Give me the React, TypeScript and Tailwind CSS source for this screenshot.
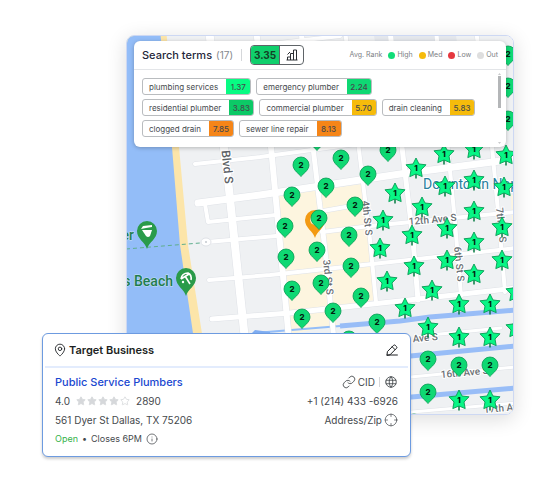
import { Crosshair, Info, Link as LinkIcon, MapPin, Star } from "lucide-react";
import { TbWorld } from "react-icons/tb";

const searchTerms = [
  { name: "plumbing services", rank: "1.37", color: "bg-[#08fb83]" },
  { name: "emergency plumber", rank: "2.24", color: "bg-[#0fd873]" },
  { name: "residential plumber", rank: "3.83", color: "bg-[#0cc966]" },
  { name: "commercial plumber", rank: "5.70", color: "bg-[#f6bb0b]" },
  { name: "drain cleaning", rank: "5.83", color: "bg-[#f6bb0b]" },
  { name: "clogged drain", rank: "7.85", color: "bg-[#f58518]" },
  { name: "sewer line repair", rank: "8.13", color: "bg-[#f58518]" },
];

const legend = [
  { label: "High", color: "bg-[#12dc78]" },
  { label: "Med", color: "bg-[#f6bb0b]" },
  { label: "Low", color: "bg-[#e5383f]" },
  { label: "Out", color: "bg-[#dedede]" },
];

const roads = [
  { d: "M209 30 L228 180 L245 340", w: 8 },
  { d: "M256 30 L271 147 L289 340", w: 6 },
  { d: "M301 30 L313 147 L325 250 L334 340", w: 5 },
  { d: "M345 30 L359 150 L370 240 L376 302", w: 4 },
  { d: "M390 30 L402 147 L413 240 L418 300", w: 5 },
  { d: "M436 30 L449 160 L455 222 L461 296", w: 4 },
  { d: "M476 30 L492 147 L499 222 L505 292", w: 4 },
  { d: "M198 203 L260 195 L400 174 L516 159", w: 7 },
  { d: "M195 164 L260 157 L400 138", w: 4 },
  { d: "M205 204 L208 222 L276 215", w: 4 },
  { d: "M317 212 L357 205", w: 4 },
  { d: "M207 242 L276 236", w: 4 },
  { d: "M322 232 L370 226 L516 212", w: 4 },
  { d: "M209 280 L270 275 L400 261 L516 248", w: 4 },
  { d: "M212 319 L290 313 L400 301 L516 288", w: 5 },
  { d: "M430 335 L501 328", w: 3 },
  { d: "M400 378 L516 367", w: 3 },
  { d: "M400 413 L516 403", w: 3 },
  { d: "M230 48 L270 44 L340 36", w: 4 },
];

const rankTwoPins = [
  [508, 54], [508, 86], [508, 119], [317, 139], [388, 150], [341, 158],
  [301, 165], [368, 174], [326, 186], [292, 195], [355, 205], [319, 218],
  [285, 226], [349, 235], [317, 250], [286, 257], [351, 266], [321, 283],
  [292, 289], [361, 296], [333, 311], [302, 317], [377, 322], [349, 339],
  [428, 359], [459, 365], [490, 365], [428, 392], [414, 422],
];

const rankOneStars = [
  [444, 154], [474, 149], [506, 155], [416, 168], [445, 186], [474, 180],
  [504, 187], [395, 193], [422, 207], [474, 211], [383, 220], [447, 228],
  [502, 227], [412, 235], [474, 242], [380, 248], [447, 260], [502, 260],
  [414, 266], [474, 274], [387, 281], [432, 290], [516, 292], [405, 308],
  [459, 304], [490, 304], [428, 327], [516, 328], [459, 337], [490, 337],
  [459, 400], [490, 400],
];

function RankPin({ x, y }: { x: number; y: number }) {
  return (
    <g transform={`translate(${x} ${y})`}>
      <path
        d="M0 11.5 C-1.5 9 -8 5.5 -8 0 A8 8 0 0 1 8 0 C8 5.5 1.5 9 0 11.5 Z"
        fill="#0fd873"
        stroke="#079a53"
        strokeWidth="0.8"
      />
      <text y="3" textAnchor="middle" fontSize="8" fontWeight="800" fill="#02200f">
        2
      </text>
    </g>
  );
}

function RankStar({ x, y }: { x: number; y: number }) {
  return (
    <g transform={`translate(${x} ${y})`}>
      <path d="M0 5 V10.5" stroke="#067a42" strokeWidth="1.5" />
      <path
        d="M0 -10 L3 -4 L10 -3.2 L5 2 L6.2 8.6 L0 6 L-6.2 8.6 L-5 2 L-10 -3.2 L-3 -4 Z"
        fill="#08f585"
        stroke="#079a53"
        strokeWidth="0.9"
        strokeLinejoin="round"
      />
      <text y="3" textAnchor="middle" fontSize="8" fontWeight="800" fill="#02200f">
        1
      </text>
    </g>
  );
}

function RankMap() {
  return (
    <svg
      className="absolute inset-0 h-full w-full"
      viewBox="127 36 386 378"
      preserveAspectRatio="xMinYMin slice"
      role="img"
      aria-label="Local ranking map"
    >
      <rect x="126" y="35" width="388" height="380" fill="#eff1f3" />
      <path d="M374 35 L456 35 L462 80 L380 80 Z" fill="#e4e7ec" />

      {/* coast */}
      <path d="M126 30 H166 L179 147 L188 245 L203 340 V420 H126 Z" fill="#fce5a9" />
      <path d="M126 30 H160 L172 147 L180 245 L194 340 V420 H126 Z" fill="#93bdf8" />

      {/* commercial blocks */}
      <path d="M277 196 L362 184 L374 300 L335 308 L337 326 L289 334 Z" fill="#fdf5df" />
      <path d="M511 195 L516 195 V225 L512 225 Z" fill="#fdf5df" />

      {/* canals */}
      <path d="M255 333 L340 326" stroke="#93bdf8" strokeWidth="2" />
      <path d="M252 333 L255 330 L270 332 V335 Z" fill="#7fadf2" />
      <path d="M340 326 L400 321 L430 317 L516 310" stroke="#98bdf7" strokeWidth="5" fill="none" />
      <path d="M400 357 L516 346" stroke="#98bdf7" strokeWidth="5" />
      <path d="M400 398 L516 388" stroke="#98bdf7" strokeWidth="5" />

      <g fill="none" strokeLinecap="round" strokeLinejoin="round">
        {roads.map((road) => (
          <path key={road.d} d={road.d} stroke="#dfe2e7" strokeWidth={road.w + 1} />
        ))}
        {roads.map((road) => (
          <path key={road.d} d={road.d} stroke="#ffffff" strokeWidth={road.w} />
        ))}
      </g>
      <ellipse cx="206" cy="242" rx="5" ry="4" fill="#fff" stroke="#dfe2e7" />
      <circle cx="206" cy="242" r="1" fill="#c3c8ce" />
      <path d="M126 249 L200 243" stroke="#5fae8d" strokeDasharray="4 3" />

      <g
        fontFamily="Roboto, sans-serif"
        fontSize="10"
        fontWeight="500"
        fill="#6b7075"
        stroke="#fff"
        strokeWidth="2"
        paintOrder="stroke"
      >
        <text transform="translate(225 184) rotate(84)" textAnchor="end" fontSize="12" fill="#5c6166">
          Gulf Shore Blvd S
        </text>
        <text transform="translate(362 201) rotate(84)">4th St S</text>
        <text transform="translate(323 260) rotate(84)">3rd St S</text>
        <text transform="translate(454 247) rotate(84)">6th St S</text>
        <text transform="translate(496 208) rotate(84)">7th St S</text>
        <text transform="translate(409 225) rotate(-5)">12th Ave S</text>
        <text transform="translate(438 340) rotate(-5)" textAnchor="end">
          14th Ave S
        </text>
        <text transform="translate(441 378) rotate(-5)">16th Ave S</text>
        <text transform="translate(484 413) rotate(-5)">17th Ave S</text>
        <text x="423" y="189" fontSize="14" fontWeight="400" fill="#287f9e">
          Downtown Naples
        </text>
      </g>

      <g
        fontFamily="Roboto, sans-serif"
        fontSize="14"
        fontWeight="500"
        fill="#1f7d4f"
        stroke="#c9e0f5"
        strokeWidth="1"
        paintOrder="stroke"
      >
        <text x="134" y="240" textAnchor="end">
          Pier
        </text>
        <text x="173" y="286" textAnchor="end">
          Naples Beach
        </text>
      </g>

      {/* landmarks */}
      <g transform="translate(147 231)">
        <path d="M0 18 C-2 11 -10 8 -10 0 A10 10 0 0 1 10 0 C10 8 2 11 0 18 Z" fill="#2a9b4a" />
        <path d="M-5 -1 H5 L3 5 Q1 7 -1 5 Z" fill="#fff" />
        <path d="M-6 -2 L-4 -5 L5 -6 V-4 L-1 -3 Z" fill="#fff" />
      </g>
      <g transform="translate(186 278)">
        <path d="M0 18 C-2 11 -10 8 -10 0 A10 10 0 0 1 10 0 C10 8 2 11 0 18 Z" fill="#2a9b4a" />
        <path d="M-5 1 Q-4 -5 2 -5 Q6 -3 5 2 M-5 1 L3 -4 M-1 -2 L4 6" fill="none" stroke="#fff" strokeWidth="1.6" />
        <circle cx="-3" cy="4" r="1.2" fill="#fff" />
      </g>

      {/* business location */}
      <g transform="translate(315 220)">
        <path d="M0 18 C-2 11 -10 8 -10 0 A10 10 0 0 1 10 0 C10 8 2 11 0 18 Z" fill="#f39a12" />
        <circle r="5" fill="#fbe6bd" />
      </g>

      <g fontFamily="Inter, sans-serif">
        {rankOneStars.map(([x, y]) => (
          <RankStar key={`${x}-${y}`} x={x} y={y} />
        ))}
        {rankTwoPins.map(([x, y]) => (
          <RankPin key={`${x}-${y}`} x={x} y={y} />
        ))}
      </g>
    </svg>
  );
}

function BarsIcon() {
  return (
    <svg className="h-3 w-3" viewBox="0 0 12 12" fill="none" stroke="#2b2f33" strokeLinejoin="round">
      <path d="M1.5 11 V8 H4.5 V11 M4.5 11 V4.5 H7.5 V11 M7.5 11 V1 H10.5 V11 M0.5 11 H11.5 M1.5 5.5 L4 3" />
    </svg>
  );
}

function EditIcon() {
  return (
    <svg
      className="h-3 w-3"
      viewBox="0 0 12 12"
      fill="none"
      stroke="#1c1f22"
      strokeLinecap="round"
      strokeLinejoin="round"
    >
      <path d="M1 11 L1.4 7.6 L7.6 1.3 Q8.4 0.6 9.2 1.3 L10.6 2.7 Q11.3 3.5 10.6 4.2 L4.2 10.6 Z M6.2 2.8 L9.1 5.7 M1 11 H11.4" />
    </svg>
  );
}

function SearchTerms() {
  return (
    <section className="relative rounded-md bg-white shadow-[0_1px_4px_rgba(0,0,0,0.25)]">
      <header className="flex h-[29px] items-center border-b border-[#e3e5e8] px-2">
        <h1 className="text-[11px] font-medium text-[#23263a]">Search terms</h1>
        <span className="ml-1 text-[10px] text-[#85888c]">(17)</span>
        <span className="mx-2 h-3 w-px bg-[#d5d7da]" />
        <button
          type="button"
          aria-label="Show rank chart"
          className="flex h-5 items-stretch overflow-hidden rounded-[4px] border border-[#5f6468]"
        >
          <span className="flex w-7 items-center justify-center bg-[#10cf6c] text-[10px] font-bold text-[#134127]">
            3.35
          </span>
          <span className="flex w-6 items-center justify-center border-l border-[#5f6468]">
            <BarsIcon />
          </span>
        </button>
        <div className="ml-auto flex items-center gap-1.5 text-[7px] text-[#7c8084]">
          <span>Avg. Rank</span>
          {legend.map((item) => (
            <span key={item.label} className="flex items-center gap-0.5">
              <span className={`h-[7px] w-[7px] rounded-full ${item.color}`} />
              {item.label}
            </span>
          ))}
        </div>
      </header>
      <div className="flex">
        <ul className="flex flex-1 flex-wrap gap-x-[5px] gap-y-1 pt-2 pr-3 pb-2.5 pl-2">
          {searchTerms.map((term) => (
            <li
              key={term.name}
              className="flex h-[17px] items-stretch overflow-hidden rounded-[3px] border border-[#b9bcbf] text-[8px] text-[#45494d]"
            >
              <span className="flex items-center pr-2 pl-1.5">{term.name}</span>
              <span className={`flex w-6 items-center justify-center font-medium ${term.color}`}>
                {term.rank}
              </span>
            </li>
          ))}
        </ul>
        <div className="flex w-2 flex-col items-start py-0.5">
          <svg className="h-1 w-[3px]" viewBox="0 0 3 4" fill="#c9cbcd">
            <path d="M0 3 L1.5 1 L3 3 Z" />
          </svg>
          <span className="h-8 w-[3px] bg-[#b4b6b8]" />
          <svg className="mt-auto h-1 w-[3px]" viewBox="0 0 3 4" fill="#c9cbcd">
            <path d="M0 1 L1.5 3 L3 1 Z" />
          </svg>
        </div>
      </div>
    </section>
  );
}

function TargetBusiness() {
  return (
    <section className="relative -mt-[82px] mr-[103px] rounded-md border border-[#6d9be0] bg-white text-[10px] text-[#45494d] shadow-[0_2px_3px_rgba(0,0,0,0.2)]">
      <header className="flex h-8 items-center px-3">
        <MapPin className="-ml-0.5 h-3.5 w-3.5 text-[#1c1f22]" strokeWidth={1.5} />
        <h2 className="ml-0.5 text-[11px] font-semibold text-[#1c1f22]">Target Business</h2>
        <button type="button" aria-label="Edit business" className="ml-auto">
          <EditIcon />
        </button>
      </header>
      <div className="mx-0.5 h-0.5 bg-[#e3ecfd]" />
      <div className="flex justify-between px-3 pt-1 pb-2">
        <div className="flex flex-col">
          <a href="#business" className="h-5 leading-5 text-[11px] font-medium text-[#1a48d0]">
            Public Service Plumbers
          </a>
          <p className="flex h-[18px] items-center">
            4.0
            <span className="mx-1.5 flex gap-px" role="img" aria-label="4 out of 5 stars">
              {[1, 2, 3, 4].map((n) => (
                <Star key={n} className="h-2.5 w-2.5 fill-[#d6d8db] text-[#d6d8db]" />
              ))}
              <Star className="h-2.5 w-2.5 text-[#d6d8db]" />
            </span>
            2890
          </p>
          <p className="h-5 leading-5">561 Dyer St Dallas, TX 75206</p>
          <p className="flex h-[18px] items-center gap-1 text-[9px]">
            <span className="text-[#35b24a]">Open</span>
            <span>•</span>
            <span>Closes 6PM</span>
            <Info className="h-3 w-3" strokeWidth={1.5} />
          </p>
        </div>
        <div className="flex flex-col items-end">
          <div className="flex h-5 items-center">
            <a href="#cid" className="flex items-center gap-0.5">
              <LinkIcon className="h-3.5 w-3.5" strokeWidth={1.5} />
              CID
            </a>
            <span className="mx-1 h-2.5 w-px bg-[#d5d7da]" />
            <a href="#website" aria-label="Website">
              <TbWorld className="h-3.5 w-3.5" strokeWidth={1.5} />
            </a>
          </div>
          <a href="tel:+12144336926" className="h-[18px] leading-[18px]">
            +1 (214) 433 -6926
          </a>
          <p className="flex h-5 items-center gap-0.5">
            Address/Zip
            <Crosshair className="h-3.5 w-3.5" strokeWidth={1.2} />
          </p>
        </div>
      </div>
    </section>
  );
}

export default function App() {
  return (
    <main className="min-h-screen bg-white pt-[35px] pr-9 pl-[42px] font-['Inter',sans-serif]">
      <div className="relative ml-[84px] h-[380px] overflow-hidden rounded-lg border border-[#cdd8f3] px-[7px] pt-[5px] shadow-[0_4px_20px_rgba(0,0,0,0.14)]">
        <RankMap />
        <SearchTerms />
      </div>
      <TargetBusiness />
    </main>
  );
}
